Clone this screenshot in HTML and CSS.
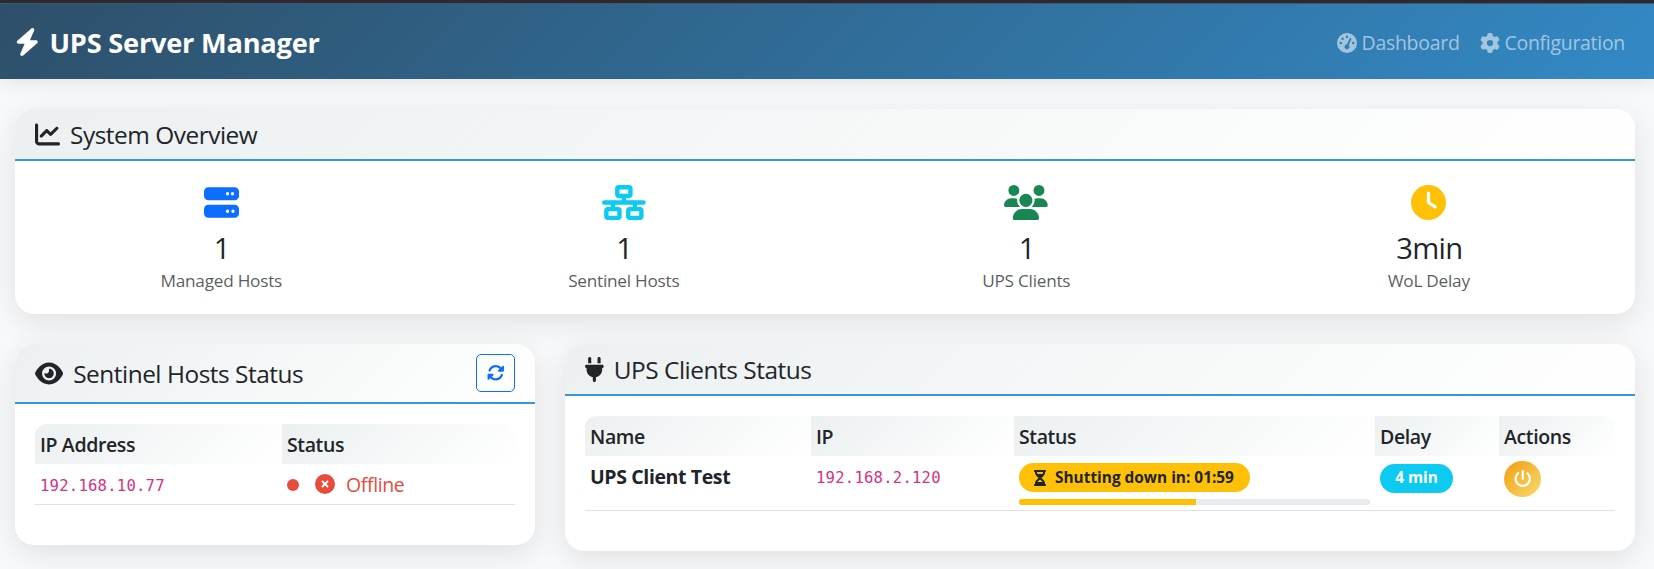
FILE: index.html
```html
<!DOCTYPE html>
<html lang="en">
<head>
<meta charset="utf-8">
<title>UPS Server Manager</title>
<link rel="stylesheet" href="styles.css">
</head>
<body>
<nav class="navbar">
  <a class="brand"><svg class="icon" viewBox="0 0 448 512"><path d="M349.4 44.6c5.9-13.7 1.5-29.7-10.6-38.5s-28.6-8-39.9 1.8l-256 224c-10 8.8-13.6 22.9-8.9 35.3S50.7 288 64 288l111.5 0L98.6 467.4c-5.9 13.7-1.5 29.7 10.6 38.5s28.6 8 39.9-1.8l256-224c10-8.8 13.6-22.9 8.9-35.3s-16.6-20.7-30-20.7l-111.5 0L349.4 44.6z"/></svg><span class="brand-text">UPS Server Manager</span></a>
  <div class="nav-links">
    <a class="nav-link"><svg class="icon" viewBox="0 0 512 512"><path fill-rule="evenodd" d="M0 256a256 256 0 1 1 512 0A256 256 0 1 1 0 256zM288 96a32 32 0 1 0 -64 0 32 32 0 1 0 64 0zM256 416c35.3 0 64-28.7 64-64c0-17.4-6.9-33.1-18.1-44.6L366 161.7c5.3-12.1-.2-26.3-12.3-31.6s-26.3 .2-31.6 12.3L257.9 288c-.6 0-1.3 0-1.9 0c-35.3 0-64 28.7-64 64s28.7 64 64 64zM176 144a32 32 0 1 0 -64 0 32 32 0 1 0 64 0zM96 288a32 32 0 1 0 0-64 32 32 0 1 0 0 64zm352-32a32 32 0 1 0 -64 0 32 32 0 1 0 64 0z"/></svg><span>Dashboard</span></a>
    <a class="nav-link"><svg class="icon" viewBox="0 0 512 512"><path d="M495.9 166.6c3.2 8.7 .5 18.4-6.4 24.6l-43.3 39.4c1.1 8.3 1.7 16.8 1.7 25.4s-.6 17.1-1.7 25.4l43.3 39.4c6.9 6.2 9.6 15.9 6.4 24.6c-4.4 11.9-9.7 23.3-15.8 34.3l-4.7 8.1c-6.6 11-14 21.4-22.1 31.2c-5.9 7.2-15.7 9.6-24.5 6.8l-55.7-17.7c-13.4 10.3-28.2 18.9-44 25.4l-12.5 57.1c-2 9.1-9 16.3-18.2 17.8c-13.8 2.3-28 3.5-42.5 3.5s-28.7-1.2-42.5-3.5c-9.2-1.5-16.2-8.7-18.2-17.8l-12.5-57.1c-15.8-6.5-30.6-15.1-44-25.4L83.1 425.9c-8.8 2.8-18.6 .3-24.5-6.8c-8.1-9.8-15.5-20.2-22.1-31.2l-4.7-8.1c-6.1-11-11.4-22.4-15.8-34.3c-3.2-8.7-.5-18.4 6.4-24.6l43.3-39.4C64.6 273.1 64 264.6 64 256s.6-17.1 1.7-25.4L22.4 191.2c-6.9-6.2-9.6-15.9-6.4-24.6c4.4-11.9 9.7-23.3 15.8-34.3l4.7-8.1c6.6-11 14-21.4 22.1-31.2c5.9-7.2 15.7-9.6 24.5-6.8l55.7 17.7c13.4-10.3 28.2-18.9 44-25.4l12.5-57.1c2-9.1 9-16.3 18.2-17.8C227.3 1.2 241.5 0 256 0s28.7 1.2 42.5 3.5c9.2 1.5 16.2 8.7 18.2 17.8l12.5 57.1c15.8 6.5 30.6 15.1 44 25.4l55.7-17.7c8.8-2.8 18.6-.3 24.5 6.8c8.1 9.8 15.5 20.2 22.1 31.2l4.7 8.1c6.1 11 11.4 22.4 15.8 34.3zM256 336a80 80 0 1 0 0-160 80 80 0 1 0 0 160z"/></svg><span>Configuration</span></a>
  </div>
</nav>
<main class="page">
  <section class="card overview">
    <header class="card-header"><svg class="icon" viewBox="0 0 512 512"><path d="M64 64c0-17.7-14.3-32-32-32S0 46.3 0 64L0 400c0 44.2 35.8 80 80 80l400 0c17.7 0 32-14.3 32-32s-14.3-32-32-32L80 416c-8.8 0-16-7.2-16-16L64 64zm406.6 86.6c12.5-12.5 12.5-32.8 0-45.3s-32.8-12.5-45.3 0L320 210.7l-57.4-57.4c-12.5-12.5-32.8-12.5-45.3 0l-112 112c-12.5 12.5-12.5 32.8 0 45.3s32.8 12.5 45.3 0L240 221.3l57.4 57.4c12.5 12.5 32.8 12.5 45.3 0l128-128z"/></svg><h5 class="title">System Overview</h5></header>
    <div class="stats">
      <div class="stat"><svg class="icon primary" viewBox="0 0 512 512"><path fill-rule="evenodd" d="M64 32C28.7 32 0 60.7 0 96l0 64c0 35.3 28.7 64 64 64l384 0c35.3 0 64-28.7 64-64l0-64c0-35.3-28.7-64-64-64L64 32zm280 72a24 24 0 1 1 0 48 24 24 0 1 1 0-48zm48 24a24 24 0 1 1 48 0 24 24 0 1 1 -48 0zM64 288c-35.3 0-64 28.7-64 64l0 64c0 35.3 28.7 64 64 64l384 0c35.3 0 64-28.7 64-64l0-64c0-35.3-28.7-64-64-64L64 288zm280 72a24 24 0 1 1 0 48 24 24 0 1 1 0-48zm56 24a24 24 0 1 1 48 0 24 24 0 1 1 -48 0z"/></svg><h4 class="value">1</h4><small class="label">Managed Hosts</small></div>
      <div class="stat"><svg class="icon info" viewBox="0 0 640 512"><path fill-rule="evenodd" d="M256 64l128 0 0 64-128 0 0-64zM240 0c-26.5 0-48 21.5-48 48l0 96c0 26.5 21.5 48 48 48l48 0 0 32L32 224c-17.7 0-32 14.3-32 32s14.3 32 32 32l96 0 0 32-48 0c-26.5 0-48 21.5-48 48l0 96c0 26.5 21.5 48 48 48l160 0c26.5 0 48-21.5 48-48l0-96c0-26.5-21.5-48-48-48l-48 0 0-32 256 0 0 32-48 0c-26.5 0-48 21.5-48 48l0 96c0 26.5 21.5 48 48 48l160 0c26.5 0 48-21.5 48-48l0-96c0-26.5-21.5-48-48-48l-48 0 0-32 96 0c17.7 0 32-14.3 32-32s-14.3-32-32-32l-256 0 0-32 48 0c26.5 0 48-21.5 48-48l0-96c0-26.5-21.5-48-48-48L240 0zM96 448l0-64 128 0 0 64L96 448zm320-64l128 0 0 64-128 0 0-64z"/></svg><h4 class="value">1</h4><small class="label">Sentinel Hosts</small></div>
      <div class="stat"><svg class="icon success" viewBox="0 0 640 512"><path d="M144 0a80 80 0 1 1 0 160A80 80 0 1 1 144 0zM512 0a80 80 0 1 1 0 160A80 80 0 1 1 512 0zM0 298.7C0 239.8 47.8 192 106.7 192l42.7 0c15.9 0 31 3.5 44.6 9.7c-1.3 7.2-1.9 14.7-1.9 22.3c0 38.2 16.8 72.5 43.3 96c-.2 0-.4 0-.7 0L21.3 320C9.6 320 0 310.4 0 298.7zM405.3 320c-.2 0-.4 0-.7 0c26.6-23.5 43.3-57.8 43.3-96c0-7.6-.7-15-1.9-22.3c13.6-6.3 28.7-9.7 44.6-9.7l42.7 0C592.2 192 640 239.8 640 298.7c0 11.8-9.6 21.3-21.3 21.3l-213.3 0zM224 224a96 96 0 1 1 192 0 96 96 0 1 1 -192 0zM128 485.3C128 411.7 187.7 352 261.3 352l117.3 0C452.3 352 512 411.7 512 485.3c0 14.7-11.9 26.7-26.7 26.7l-330.7 0c-14.7 0-26.7-11.9-26.7-26.7z"/></svg><h4 class="value">1</h4><small class="label">UPS Clients</small></div>
      <div class="stat"><svg class="icon warning" viewBox="0 0 512 512"><path fill-rule="evenodd" d="M256 0a256 256 0 1 1 0 512A256 256 0 1 1 256 0zM232 120l0 136c0 8 4 15.5 10.7 20l96 64c11 7.4 25.9 4.4 33.3-6.7s4.4-25.9-6.7-33.3L280 243.2 280 120c0-13.3-10.7-24-24-24s-24 10.7-24 24z"/></svg><h4 class="value">3min</h4><small class="label">WoL Delay</small></div>
    </div>
  </section>
  <div class="columns">
    <section class="card sentinel">
      <header class="card-header tall"><svg class="icon" viewBox="0 0 576 512"><path fill-rule="evenodd" d="M288 32c-80.8 0-145.5 36.8-192.6 80.6C48.6 156 17.3 208 2.5 243.7c-3.3 7.9-3.3 16.7 0 24.6C17.3 304 48.6 356 95.4 399.4C142.5 443.2 207.2 480 288 480s145.5-36.8 192.6-80.6c46.8-43.5 78.1-95.4 93-131.1c3.3-7.9 3.3-16.7 0-24.6c-14.9-35.7-46.2-87.7-93-131.1C433.5 68.8 368.8 32 288 32zM144 256a144 144 0 1 1 288 0 144 144 0 1 1 -288 0zm144-64c0 35.3-28.7 64-64 64c-7.1 0-13.9-1.2-20.3-3.3c-5.5-1.8-11.9 1.6-11.7 7.4c.3 6.9 1.3 13.8 3.2 20.7c13.7 51.2 66.4 81.6 117.6 67.9s81.6-66.4 67.9-117.6c-11.1-41.5-47.8-69.4-88.6-71.1c-5.8-.2-9.2 6.1-7.4 11.7c2.1 6.4 3.3 13.2 3.3 20.3z"/></svg><h5 class="title">Sentinel Hosts Status</h5><button class="refresh" aria-label="Refresh"><svg class="icon" viewBox="0 0 512 512"><path d="M142.9 142.9c-17.5 17.5-30.1 38-37.8 59.8c-5.9 16.7-24.2 25.4-40.8 19.5s-25.4-24.2-19.5-40.8C55.6 150.7 73.2 122 97.6 97.6c87.2-87.2 228.3-87.5 315.8-1L455 55c6.9-6.9 17.2-8.9 26.2-5.2s14.8 12.5 14.8 22.2l0 128c0 13.3-10.7 24-24 24l-8.4 0L344 224c-9.7 0-18.5-5.8-22.2-14.8s-1.7-19.3 5.2-26.2l41.1-41.1c-62.6-61.5-163.1-61.2-225.3 1zM16 312c0-13.3 10.7-24 24-24l7.6 0 .7 0L168 288c9.7 0 18.5 5.8 22.2 14.8s1.7 19.3-5.2 26.2l-41.1 41.1c62.6 61.5 163.1 61.2 225.3-1c17.5-17.5 30.1-38 37.8-59.8c5.9-16.7 24.2-25.4 40.8-19.5s25.4 24.2 19.5 40.8c-10.8 30.6-28.4 59.3-52.9 83.8c-87.2 87.2-228.3 87.5-315.8 1L57 457c-6.9 6.9-17.2 8.9-26.2 5.2S16 449.7 16 440l0-119.6 0-.7 0-7.6z"/></svg></button></header>
      <div class="table sentinel-table">
        <div class="row head"><div class="th">IP Address</div><div class="th">Status</div></div>
        <div class="row body"><div class="td"><code>192.168.10.77</code></div><div class="td offline"><span class="dot"></span><svg class="icon" viewBox="0 0 512 512"><path fill-rule="evenodd" d="M256 512A256 256 0 1 0 256 0a256 256 0 1 0 0 512zM175 175c9.4-9.4 24.6-9.4 33.9 0l47 47 47-47c9.4-9.4 24.6-9.4 33.9 0s9.4 24.6 0 33.9l-47 47 47 47c9.4 9.4 9.4 24.6 0 33.9s-24.6 9.4-33.9 0l-47-47-47 47c-9.4 9.4-24.6 9.4-33.9 0s-9.4-24.6 0-33.9l47-47-47-47c-9.4-9.4-9.4-24.6 0-33.9z"/></svg><span class="offline-text">Offline</span></div></div>
      </div>
    </section>
    <section class="card clients">
      <header class="card-header"><svg class="icon" viewBox="0 0 384 512"><path d="M96 0C78.3 0 64 14.3 64 32l0 96 64 0 0-96c0-17.7-14.3-32-32-32zM288 0c-17.7 0-32 14.3-32 32l0 96 64 0 0-96c0-17.7-14.3-32-32-32zM32 160c-17.7 0-32 14.3-32 32s14.3 32 32 32l0 32c0 77.4 55 142 128 156.8l0 67.2c0 17.7 14.3 32 32 32s32-14.3 32-32l0-67.2C297 398 352 333.4 352 256l0-32c17.7 0 32-14.3 32-32s-14.3-32-32-32L32 160z"/></svg><h5 class="title">UPS Clients Status</h5></header>
      <div class="table clients-table">
        <div class="row head"><div class="th">Name</div><div class="th">IP</div><div class="th">Status</div><div class="th">Delay</div><div class="th">Actions</div></div>
        <div class="row body">
          <div class="td"><strong class="client-name">UPS Client Test</strong></div>
          <div class="td"><code>192.168.2.120</code></div>
          <div class="td status">
            <span class="badge countdown"><svg class="icon" viewBox="0 0 384 512"><path fill-rule="evenodd" d="M32 0C14.3 0 0 14.3 0 32S14.3 64 32 64l0 11c0 42.4 16.9 83.1 46.9 113.1L146.7 256 78.9 323.9C48.9 353.9 32 394.6 32 437l0 11c-17.7 0-32 14.3-32 32s14.3 32 32 32l320 0c17.7 0 32-14.3 32-32s-14.3-32-32-32l0-11c0-42.4-16.9-83.1-46.9-113.1L237.3 256l67.9-67.9c30-30 46.9-70.7 46.9-113.1l0-11c17.7 0 32-14.3 32-32s-14.3-32-32-32L32 0zM96 75l0-11 192 0 0 11c0 19-5.6 37.4-16 53L112 128c-10.3-15.6-16-34-16-53zm16 309c3.5-5.3 7.6-10.3 12.1-14.9L192 301.3l67.9 67.9c4.6 4.6 8.6 9.6 12.1 14.9L112 384z"/></svg><span>Shutting down in: 01:59</span></span>
            <div class="progress"><div class="progress-bar" style="width:50.4%"></div></div>
          </div>
          <div class="td"><span class="badge delay">4 min</span></div>
          <div class="td"><button class="power" aria-label="Power"><svg class="icon" viewBox="0 0 512 512"><path d="M288 32c0-17.7-14.3-32-32-32s-32 14.3-32 32l0 224c0 17.7 14.3 32 32 32s32-14.3 32-32l0-224zM143.5 120.6c13.6-11.3 15.4-31.5 4.1-45.1s-31.5-15.4-45.1-4.1C49.7 115.4 16 181.8 16 256c0 132.5 107.5 240 240 240s240-107.5 240-240c0-74.2-33.8-140.6-86.6-184.6c-13.6-11.3-33.8-9.4-45.1 4.1s-9.4 33.8 4.1 45.1c38.9 32.3 63.5 81 63.5 135.4c0 97.2-78.8 176-176 176s-176-78.8-176-176c0-54.4 24.7-103.1 63.5-135.4z"/></svg></button></div>
        </div>
      </div>
    </section>
  </div>
</main>
</body>
</html>
```

FILE: styles.css
```css
* { box-sizing: border-box; }
body {
  margin: 0;
  height: 569px;
  overflow: hidden;
  border-top: 3px solid #2b2a33;
  background: #f8f9fb;
  color: #212529;
  font: 19.5px/30px "Open Sans", "Noto Sans", sans-serif;
  letter-spacing: -0.38px;
}
h4, h5 { margin: 0; font-weight: 400; }
.icon { display: block; height: 1em; fill: currentColor; flex: none; }
button { padding: 0; display: flex; align-items: center; justify-content: center; }

.navbar {
  height: 76px;
  padding: 0 29px 0 15px;
  display: flex;
  align-items: center;
  justify-content: space-between;
  border-top: 1px solid #43576b;
  background: linear-gradient(135deg, #2e4f69 0%, #3389c5 100%);
  box-shadow: 0 2px 20px rgba(0, 0, 0, .1);
}
.brand { display: flex; align-items: center; gap: 10px; color: #fff; font-size: 28px; font-weight: 700; }
.brand-text { padding-top: 2px; font-size: 27.2px; letter-spacing: -0.22px; }
.nav-links { display: flex; gap: 20px; padding-top: 2px; }
.nav-link { display: flex; align-items: center; gap: 5px; color: rgba(255, 255, 255, .55); letter-spacing: -0.3px; }
.nav-link .icon { height: 20px; }

.page { padding: 30px 19px 0 15px; display: flex; flex-direction: column; gap: 30px; }
.card {
  border-radius: 19px;
  background: #fff;
  overflow: hidden;
  box-shadow: 0 8px 30px rgba(0, 0, 0, .1);
}
.card-header {
  height: 52px;
  padding: 1px 20px 0;
  display: flex;
  align-items: center;
  gap: 10px;
  border-bottom: 2px solid #3498db;
  background: linear-gradient(135deg, #ecf0f1 0%, #fff 100%);
  font-size: 25px;
}
.card-header.tall { height: 60px; padding-top: 0; }
.title { padding-top: 1px; font-size: 24.4px; letter-spacing: -0.47px; }
.tall .title { padding-top: 2px; }

.overview { height: 205px; }
.stats { padding: 24px 5px 0; display: grid; grid-template-columns: repeat(4, 1fr); }
.stat { display: flex; flex-direction: column; align-items: center; }
.stat .icon { height: 35px; }
.value { margin-top: 10px; padding-left: 1px; font-size: 29.2px; line-height: 36px; letter-spacing: -0.7px; }
.label { font-size: 17.2px; line-height: 26px; color: rgba(33, 37, 41, .75); margin-top: 2px; letter-spacing: -0.24px; }
.primary { color: #0d6efd; }
.info { color: #0dcaf0; }
.success { color: #198754; }
.warning { color: #ffc107; }

.columns { display: grid; grid-template-columns: 520px 1070px; gap: 30px; align-items: start; }
.sentinel { height: 201px; }
.clients { height: 207px; }
.refresh {
  width: 39px;
  height: 38px;
  margin-left: auto;
  border: 1px solid #0d6efd;
  border-radius: 5px;
  background: transparent;
  color: #0d6efd;
  font-size: 17.5px;
}

.table { margin: 20px 20px 0; }
.row { display: grid; }
.sentinel-table .row { grid-template-columns: 247px 1fr; }
.clients-table .row { grid-template-columns: 226px 203px 361px 124px 1fr; }
.th {
  height: 40px;
  padding: 0 5px;
  line-height: 42px;
  font-weight: 600;
  background: linear-gradient(135deg, #ecf0f1 0%, #fff 100%);
}
.th:first-child { border-top-left-radius: 12px; }
.th:last-child { border-top-right-radius: 12px; }
.row.body { border-bottom: 1px solid #dee2e6; }
.sentinel-table .body { height: 41px; }
.clients-table .body { height: 55px; }
.td { padding: 5px 5px 0; }
code { font: 15.6px/34px "DejaVu Sans Mono", monospace; letter-spacing: 0.21px; color: #d63384; }
.client-name { font-weight: 700; line-height: 32px; }
.offline { display: flex; align-items: center; color: #e74c3c; padding-top: 2px; }
.dot { width: 12px; height: 12px; margin-right: 16px; border-radius: 50%; background: currentColor; }
.offline .icon { height: 20px; margin: -3px 11px 0 0; }
.status { display: flex; flex-direction: column; align-items: flex-start; gap: 7px; padding-top: 7px; }
.badge {
  height: 29px;
  padding: 0 15px;
  display: inline-flex;
  align-items: center;
  border-radius: 15px;
  font-size: 15.4px;
  font-weight: 700;
  letter-spacing: 0;
}
.countdown { width: 231px; gap: 9px; white-space: nowrap; background: #ffc107; }
.countdown .icon { height: 16px; }
.delay { width: 73px; margin-top: 2px; justify-content: center; background: #0dcaf0; color: #fff; }
.progress { width: 100%; height: 6px; border-radius: 4px; background: #e9ecef; overflow: hidden; }
.progress-bar { height: 100%; background: #ffc107; }
.power {
  width: 37px;
  height: 36px;
  border: 0;
  border-radius: 50%;
  background: linear-gradient(135deg, #f39c12, #f7dc6f);
  color: #fff;
  font-size: 17.5px;
}
```
